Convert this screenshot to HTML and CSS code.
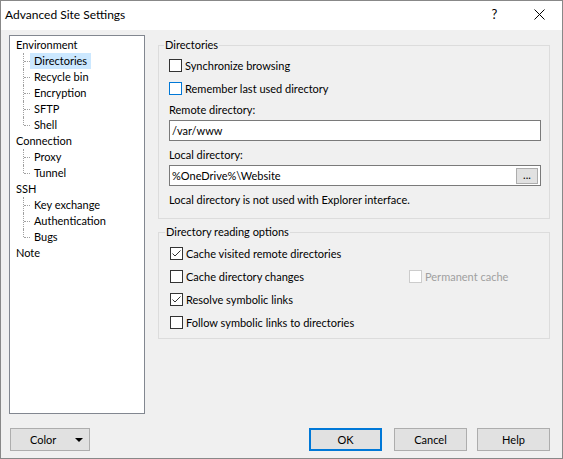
FILE: index.html
```html
<!DOCTYPE html>
<html lang="en">
<head>
    <meta charset="UTF-8">
    <title>Advanced Site Settings</title>
    <link rel="stylesheet" href="styles.css">
</head>
<body>
    <div class="window">
        <div class="titlebar">
            <span class="title">Advanced Site Settings</span>
            <div class="caption-buttons">
                <span class="caption-btn help-btn">?</span>
                <span class="caption-btn">
                    <svg width="11" height="11" viewBox="0 0 11 11"><path d="M0.5 0.5 L10.5 10.5 M10.5 0.5 L0.5 10.5" stroke="#000" stroke-width="1" fill="none"/></svg>
                </span>
            </div>
        </div>

        <div class="main">
            <!-- page tree -->
            <ul class="tree">
                <li class="node"><span class="item">Environment</span>
                    <ul class="children">
                        <li><span class="item selected">Directories</span></li>
                        <li><span class="item">Recycle bin</span></li>
                        <li><span class="item">Encryption</span></li>
                        <li><span class="item">SFTP</span></li>
                        <li class="last"><span class="item">Shell</span></li>
                    </ul>
                </li>
                <li class="node"><span class="item">Connection</span>
                    <ul class="children">
                        <li><span class="item">Proxy</span></li>
                        <li class="last"><span class="item">Tunnel</span></li>
                    </ul>
                </li>
                <li class="node"><span class="item">SSH</span>
                    <ul class="children">
                        <li><span class="item">Key exchange</span></li>
                        <li><span class="item">Authentication</span></li>
                        <li class="last"><span class="item">Bugs</span></li>
                    </ul>
                </li>
                <li class="node"><span class="item">Note</span></li>
            </ul>

            <div class="page">
                <div class="group group-dirs">
                    <div class="group-title">Directories</div>
                    <label class="check"><span class="box"></span>Synchronize browsing</label>
                    <label class="check"><span class="box hover"></span>Remember last used directory</label>
                    <div class="field-label first">Remote directory:</div>
                    <div class="edit">/var/www</div>
                    <div class="field-label">Local directory:</div>
                    <div class="edit">
                        <span>%OneDrive%\Website</span>
                        <span class="browse">...</span>
                    </div>
                    <div class="note">Local directory is not used with Explorer interface.</div>
                </div>

                <div class="group group-reading">
                    <div class="group-title">Directory reading options</div>
                    <label class="check"><span class="box checked"><svg width="11" height="11" viewBox="0 0 11 11"><polyline points="1.5,5.5 4,8 9.5,2.5" stroke="#333" stroke-width="1" fill="none"/></svg></span>Cache visited remote directories</label>
                    <div class="check-row">
                        <label class="check wide"><span class="box"></span>Cache directory changes</label>
                        <label class="check disabled"><span class="box"></span>Permanent cache</label>
                    </div>
                    <label class="check"><span class="box checked"><svg width="11" height="11" viewBox="0 0 11 11"><polyline points="1.5,5.5 4,8 9.5,2.5" stroke="#333" stroke-width="1" fill="none"/></svg></span>Resolve symbolic links</label>
                    <label class="check"><span class="box"></span>Follow symbolic links to directories</label>
                </div>
            </div>
        </div>

        <div class="footer">
            <button class="button dropdown">Color<span class="arrow"></span></button>
            <button class="button default">OK</button>
            <button class="button">Cancel</button>
            <button class="button">Help</button>
        </div>
    </div>
</body>
</html>
```

FILE: styles.css
```css
body {
    margin: 0;
    font-family: Lato, 'Liberation Sans', sans-serif;
    font-size: 11px;
    color: #000;
    background-color: #fff;
}
.window {
    width: 563px;
    height: 459px;
    box-sizing: border-box;
    border: 1px solid #888;
    background-color: #f0f0f0;
    display: flex;
    flex-direction: column;
}
.titlebar {
    height: 29px;
    flex: none;
    display: flex;
    align-items: center;
    background-color: #fff;
}
.title {
    padding-left: 4px;
    margin-top: -2px;
    font-size: 12px;
}
.caption-buttons {
    margin-left: auto;
    display: flex;
    height: 100%;
}
.caption-btn {
    width: 45px;
    display: flex;
    align-items: center;
    justify-content: center;
    margin-top: -3px;
}
.help-btn { font-size: 13px; }

.main {
    display: flex;
    padding: 5px 12px 0 8px;
    height: 384px;
    box-sizing: border-box;
}

/* tree */
.tree {
    list-style: none;
    margin: 0;
    padding: 1px 0 0 5px;
    width: 136px;
    height: 379px;
    box-sizing: border-box;
    border: 1px solid #828790;
    background-color: #fff;
    flex: none;
}
.tree li { line-height: 16px; }
.item {
    display: inline-block;
    height: 16px;
}
.node > .item { padding-left: 1px; }
.children {
    list-style: none;
    margin: 0;
    padding: 0 0 0 8px;
}
.children li {
    position: relative;
    padding-left: 7px;
}
.children li::before {
    content: '';
    position: absolute;
    left: 0;
    top: 0;
    bottom: 0;
    border-left: 1px dotted #a0a0a0;
}
.children li.last::before { bottom: 8px; }
.children li::after {
    content: '';
    position: absolute;
    left: 1px;
    top: 8px;
    width: 6px;
    border-top: 1px dotted #a0a0a0;
}
.children .item { padding: 0 4px; }
.item.selected { background-color: #cce8ff; }

/* right side */
.page {
    margin-left: 13px;
    flex: 1;
}
.group {
    border: 1px solid #dcdcdc;
    padding: 0 8px 10px 10px;
}
.group-dirs { margin-top: 10px; }
.group-reading {
    margin-top: 13px;
    padding-bottom: 4px;
    padding-left: 11px;
}
.group-title {
    display: table;
    margin: -9px 0 0 -5px;
    padding: 0 1px;
    line-height: 16px;
    background-color: #f0f0f0;
}
.group-reading .group-title { margin-left: -5px; }
.group-dirs .group-title + .check { margin-top: 1px; }
.group-reading .group-title + .check { margin-top: 2px; }

.check {
    display: flex;
    align-items: center;
    height: 23px;
}
.check-row { display: flex; }
.check.wide { width: 239px; }
.box {
    width: 13px;
    height: 13px;
    box-sizing: border-box;
    border: 1px solid #333;
    background-color: #fff;
    margin-right: 3px;
    flex: none;
    display: flex;
}
.box.hover { border-color: #0078d7; }
.check.disabled { color: #a0a0a0; }
.check.disabled .box { border-color: #cccccc; }

.field-label {
    line-height: 16px;
    margin-top: 6px;
}
.field-label.first { margin-top: 2px; }
.edit {
    margin-top: 2px;
    height: 21px;
    box-sizing: border-box;
    border: 1px solid #7a7a7a;
    background-color: #fff;
    padding: 0 2px 0 2px;
    display: flex;
    align-items: center;
}
.browse {
    margin-left: auto;
    margin-top: 1px;
    width: 22px;
    height: 16px;
    box-sizing: border-box;
    border: 1px solid #adadad;
    background-color: #e1e1e1;
    font-size: 11px;
    line-height: 12px;
    text-align: center;
}
.note {
    margin-top: 6px;
    line-height: 16px;
}

/* buttons */
.footer {
    display: flex;
    padding: 14px 12px 0 9px;
}
.button {
    width: 73px;
    height: 23px;
    font-family: inherit;
    font-size: 11px;
    color: #000;
    background-color: #e1e1e1;
    border: 1px solid #adadad;
    padding: 0;
    margin-left: 10px;
}
.button.dropdown {
    width: 80px;
    margin-left: 0;
    display: flex;
    align-items: center;
    padding-left: 19px;
}
.arrow {
    margin-left: auto;
    margin-right: 6px;
    width: 0;
    height: 0;
    border-left: 4px solid transparent;
    border-right: 4px solid transparent;
    border-top: 4px solid #000;
}
.button.default {
    margin-left: auto;
    margin-right: 2px;
    border: 2px solid #0078d7;
}
```
